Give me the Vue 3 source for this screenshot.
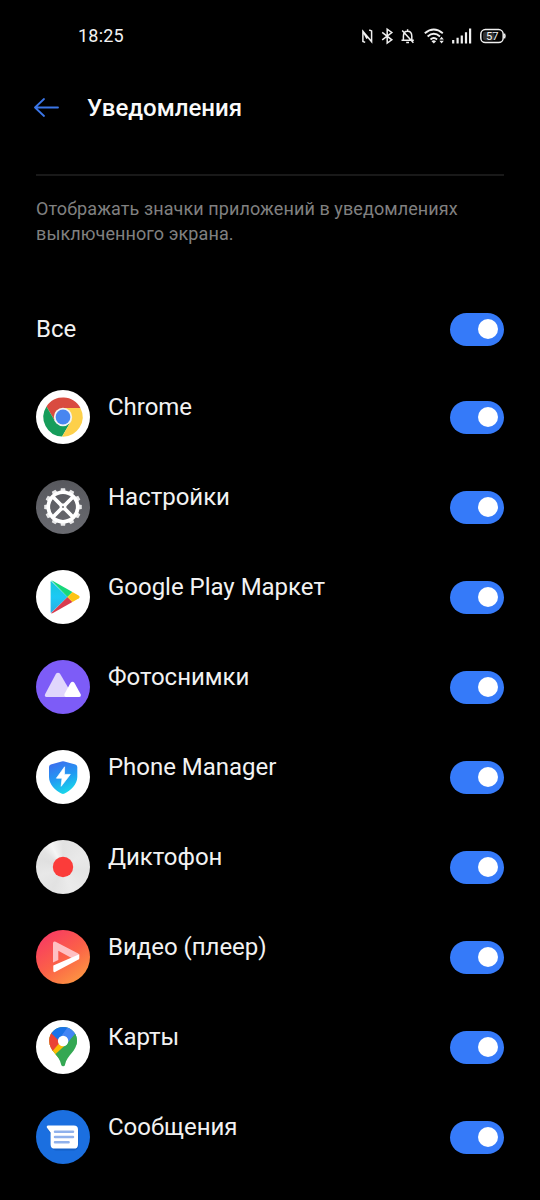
<script setup>
import { reactive } from 'vue'

const all = reactive({ on: true })
const apps = reactive([
  { id: 'chrome', name: 'Chrome', on: true },
  { id: 'settings', name: 'Настройки', on: true },
  { id: 'play', name: 'Google Play Маркет', on: true },
  { id: 'photos', name: 'Фотоснимки', on: true },
  { id: 'manager', name: 'Phone Manager', on: true },
  { id: 'recorder', name: 'Диктофон', on: true },
  { id: 'video', name: 'Видео (плеер)', on: true },
  { id: 'maps', name: 'Карты', on: true },
  { id: 'messages', name: 'Сообщения', on: true },
])
const teeth = Array.from({ length: 12 }, (_, i) => i * 30)

function toggleAll() {
  all.on = !all.on
  apps.forEach((a) => { a.on = all.on })
}
</script>

<template>
  <main class="screen">
    <header class="status">
      <span class="clock">18:25</span>
      <svg class="status-icons" width="150" height="20" viewBox="360 26 150 20" fill="none" stroke="#f0f0f0" stroke-width="1.5">
        <path d="M365.2 42.4 362.9 41.5V31.2L371.6 41.6V30.9L369.2 30M362.9 31.2 367 38.6" stroke-width="1.5" />
        <path d="M382.2 32.4 391.8 39.8 387.2 43V29.2L391.8 32.5 382.2 39.8" stroke-width="1.5" />
        <path d="M401.5 40.3H413.8M403.4 40V36.2C403.4 33 405 31.2 407.6 31.2S411.8 33 411.8 36.2V40M406.2 42.4H409M407.6 29.3V31M402.2 30.5 413.4 42.8" stroke-width="1.5" />
        <path d="M424.8 33.2Q433.8 25.8 442.8 33.2M427.6 36.4Q433.8 31.2 440 36.4M430.5 39.4Q433.8 36.8 437.1 39.4" stroke-width="1.9" />
        <path d="M431.5 41.2Q433.8 39.5 436.1 41.2L433.8 43.6Z" fill="#f0f0f0" stroke="none" />
        <path d="M439.4 39.5 441.6 36.7 443.8 39.5ZM439.4 40.8 441.6 43.6 443.8 40.8Z" fill="#f0f0f0" stroke="none" />
        <path d="M453.2 43.4V40M457.6 43.4V37.8M461.8 43.4V35.4M466 43.4V32.2M470.1 43.4V28.6" stroke-width="2.2" />
        <rect x="480.8" y="29.6" width="22.4" height="12.9" rx="4.6" stroke-width="1.5" />
        <rect x="483" y="31.7" width="11.5" height="8.7" rx="2.4" fill="#333" stroke="none" />
        <path d="M504.4 33.7Q505.6 36 504.4 38.4" stroke-width="1.5" />
        <text x="492.2" y="40" class="charge" text-anchor="middle">57</text>
      </svg>
    </header>

    <nav class="bar">
      <svg width="27" height="20" viewBox="0 0 27 20" fill="none" stroke="#3b76e8" stroke-width="1.8" stroke-linecap="round" stroke-linejoin="round">
        <path d="M11 1 2 9.5 11 18M2 9.5H25" />
      </svg>
      <h1>Уведомления</h1>
    </nav>

    <p class="hint">Отображать значки приложений в уведомлениях<br />выключенного экрана.</p>

    <div class="row row-all">
      <span class="name">Все</span>
      <button class="switch" :class="{ off: !all.on }" @click="toggleAll"></button>
    </div>

    <ul>
      <li v-for="app in apps" :key="app.id" class="row">
        <svg class="icon" width="54" height="54" viewBox="0 0 54 54">
          <template v-if="app.id === 'chrome'">
            <circle cx="27" cy="27" r="27" fill="#fff" />
            <path d="M27 27V18H44.4A19.6 19.6 0 0 0 10.5 16.4L19.2 31.5Z" fill="#d94b40" />
            <path d="M27 27 19.2 31.5 10.5 16.4A19.6 19.6 0 0 0 26.1 46.6L34.8 31.5Z" fill="#169d5b" />
            <path d="M27 27 34.8 31.5 26.1 46.6A19.6 19.6 0 0 0 44.4 18H27Z" fill="#fdd04a" />
            <circle cx="27" cy="27" r="9.2" fill="#f3f3f3" />
            <circle cx="27" cy="27" r="7.4" fill="#4886f0" />
          </template>

          <template v-else-if="app.id === 'settings'">
            <defs><linearGradient id="gs" x1="0" y1="0" x2="0" y2="1"><stop stop-color="#57585d" /><stop offset="1" stop-color="#6a6b71" /></linearGradient></defs>
            <circle cx="27" cy="27" r="27" fill="url(#gs)" />
            <path v-for="a in teeth" :key="a" d="M24.2 12.5 24.9 8.2H29.1L29.8 12.5Z" fill="#e9e9ea" :transform="`rotate(${a} 27 27)`" />
            <circle cx="27" cy="27" r="14.7" fill="none" stroke="#fff" stroke-width="3.6" />
            <path d="M16.8 16.8 37.2 37.2M37.2 16.8 16.8 37.2" stroke="#fff" stroke-width="3.7" />
            <circle cx="27" cy="27" r="3.4" fill="#fff" />
            <circle cx="27" cy="27" r="1.1" fill="#77787d" />
          </template>

          <template v-else-if="app.id === 'play'">
            <defs>
              <linearGradient id="gp" x1="0" y1="0" x2="0" y2="1"><stop stop-color="#16c7d8" /><stop offset=".5" stop-color="#1cc9f5" /><stop offset="1" stop-color="#2babe2" /></linearGradient>
              <clipPath id="cp"><path d="M14.6 12.2Q14.6 9.8 17 11L42.6 25.4Q44.6 27 42.6 28.6L17 43Q14.6 44.2 14.6 41.8Z" /></clipPath>
            </defs>
            <circle cx="27" cy="27" r="27" fill="#fff" />
            <g clip-path="url(#cp)">
              <path d="M14 10V44L31.5 27Z" fill="url(#gp)" />
              <path d="M14 9 31.5 27 37 21.5 17 9Z" fill="#17d77b" />
              <path d="M14.8 43.5 31.5 27 37 32.5 17 45Z" fill="#d93b4e" />
              <path d="M31.5 27 37 21.5 46 27 37 32.5Z" fill="#fdc414" />
            </g>
          </template>

          <template v-else-if="app.id === 'photos'">
            <circle cx="27" cy="27" r="27" fill="#7d5cf7" />
            <path d="M20.1 13.6Q22 11.8 23.9 13.6L36.2 34.6Q36.5 36.8 34.5 37H10.5Q8 36.6 9.2 34Z" fill="#e0d6fc" />
            <path d="M34.5 23Q36.5 20.6 38.5 23L44.8 34.4Q45.4 36.8 43.4 37H30Q27.6 36.4 28.6 33.8Z" fill="#fff" />
          </template>

          <template v-else-if="app.id === 'manager'">
            <defs><linearGradient id="gm" x1=".3" y1="0" x2=".65" y2="1"><stop stop-color="#3c6fee" /><stop offset=".5" stop-color="#219bf3" /><stop offset="1" stop-color="#18dce9" /></linearGradient></defs>
            <circle cx="27" cy="27" r="27" fill="#fff" />
            <path d="M25.6 11.5Q27 10.8 28.4 11.5L39.4 14.5Q41.3 15 41.3 17V27C41.3 34.5 34.5 40.5 28.6 43.5Q27 44.3 25.4 43.5C19.5 40.5 13 34.5 13 27V17Q13 15 14.8 14.5Z" fill="url(#gm)" />
            <path d="M28.6 16.8 20.4 28.2H26L25.2 36.3 34.3 24.4H28.5Z" fill="#fff" stroke="#fff" stroke-width=".7" stroke-linejoin="round" />
          </template>

          <template v-else-if="app.id === 'recorder'">
            <foreignObject width="54" height="54"><div class="disc"></div></foreignObject>
            <circle cx="27" cy="27" r="10.2" fill="#fb3c3a" />
          </template>

          <template v-else-if="app.id === 'video'">
            <defs><linearGradient id="gv" x1=".2" y1=".1" x2=".8" y2=".95"><stop stop-color="#f83e60" /><stop offset=".5" stop-color="#fb6048" /><stop offset="1" stop-color="#fd9542" /></linearGradient></defs>
            <circle cx="27" cy="27" r="27" fill="url(#gv)" />
            <path d="M17 13.5Q17 10.7 19.6 11.8L42.2 23.4Q43.8 24.6 42.6 26L36.5 28.4 22.3 20.8V30L17 32.4Z" fill="#fec0c3" />
            <path d="M17.3 35.6 43.3 24.2V28.2Q43.3 29.2 42 29.8L19 42Q17.3 42.6 17.3 40.8Z" fill="#fff" />
          </template>

          <template v-else-if="app.id === 'maps'">
            <defs><clipPath id="cm"><path d="M27.2 7C19.4 7 13.2 13.1 13.2 20.7C13.2 31.4 23.4 34.6 25.2 44.7Q25.6 46.2 27.2 46.2T29 44.7C31 34.6 41 31.4 41 20.7C41 13.1 34.9 7 27.2 7Z" /></clipPath></defs>
            <circle cx="27" cy="27" r="27" fill="#fff" />
            <g clip-path="url(#cm)">
              <path d="M10 5H45V48H10Z" fill="#34a853" />
              <path d="M10 10 24 16 33 24 17.5 41 10 34Z" fill="#fbbc04" />
              <path d="M10 8 16.5 12 26 20 14 34 10 32Z" fill="#ea4335" />
              <path d="M15 13 22 5 35 5 32.2 9.8 22.4 20.2Z" fill="#1a73e8" />
              <path d="M32 7 40 10 41.5 16.5 30 24 22.4 20.2Z" fill="#4285f4" />
              <path d="M30.5 24 41 11.5V24L25 40 19 34.5Z" fill="#34a853" />
              <path d="M31.8 7.6 38.6 12.6 30 23 24 18Z" fill="#4285f4" />
            </g>
            <circle cx="27.1" cy="21" r="5.2" fill="#fff" />
          </template>

          <template v-else>
            <circle cx="27" cy="27" r="27" fill="#1b6fe0" />
            <path d="M10.5 17 15 25V35Q15 40 20 40.4H38Q42.3 40 42.5 36V20Z" fill="#1259b8" opacity=".6" />
            <path d="M12 15.6H37.8Q42 15.6 42 19.8V34.4Q42 38.6 37.8 38.6H18.8Q14.6 38.6 14.6 34.4V22.6L10.8 17.4Q10.3 15.6 12 15.6Z" fill="#fff" />
            <path d="M19 21.7H37M19 27H37M19 32.3H32.6" stroke="#8fb1ec" stroke-width="2.5" stroke-linecap="round" />
          </template>
        </svg>
        <span class="name">{{ app.name }}</span>
        <button class="switch" :class="{ off: !app.on }" @click="app.on = !app.on"></button>
      </li>
    </ul>
  </main>
</template>

<style>
body { background: #000; }
</style>

<style scoped>
.screen {
  box-sizing: border-box;
  height: 1200px;
  overflow: hidden;
  padding: 0 36px;
  background: #000;
  color: #f2f2f2;
  font-family: Roboto, "Noto Sans", sans-serif;
}
.status {
  display: flex;
  align-items: center;
  justify-content: space-between;
  height: 72px;
  margin-right: -6px;
  padding-left: 42px;
}
.clock { padding-bottom: 2px; font-size: 18px; letter-spacing: 0.2px; }
.status-icons { display: block; }
.charge { fill: #f4f4f4; stroke: none; font-size: 11.2px; }
.bar {
  display: flex;
  align-items: center;
  gap: 27px;
  height: 102px;
  box-sizing: border-box;
  padding-bottom: 31px;
  margin-left: -3px;
}
h1 { margin: 0; font-size: 24px; font-weight: 500; color: #fafafa; }
.hint {
  margin: 0;
  padding-top: 21px;
  height: 89px;
  border-top: 2px solid #191919;
  color: #808080;
  font-size: 18px;
  line-height: 24.5px;
  letter-spacing: 0.09px;
  white-space: nowrap;
}
.row { display: flex; align-items: center; height: 90px; }
.row-all { height: 86px; }
ul { margin: 0; padding: 0; list-style: none; }
.icon { flex: none; margin-right: 18px; }
.name { flex: 1; font-size: 24px; line-height: 30px; letter-spacing: -0.02px; white-space: nowrap; }
li .name { padding-bottom: 20px; }
.switch {
  flex: none;
  display: flex;
  align-items: center;
  justify-content: flex-end;
  box-sizing: border-box;
  width: 54px;
  height: 33px;
  padding: 0 6px;
  border: 0;
  border-radius: 17px;
  background: #357af9;
}
.switch::after {
  content: "";
  width: 20px;
  height: 20px;
  border-radius: 50%;
  background: #fff;
}
.switch.off { justify-content: flex-start; background: #3a3a3a; }
.disc {
  width: 54px;
  height: 54px;
  border-radius: 50%;
  background: conic-gradient(#e2e2e2, #e9e9e9 60deg, #e4e4e4 100deg, #ebebeb 160deg, #e2e2e2 205deg, #e8e8e8 250deg, #e0e0e0 290deg, #e4e4e4 310deg, #f5f5f5 332deg, #e2e2e2);
}
</style>
